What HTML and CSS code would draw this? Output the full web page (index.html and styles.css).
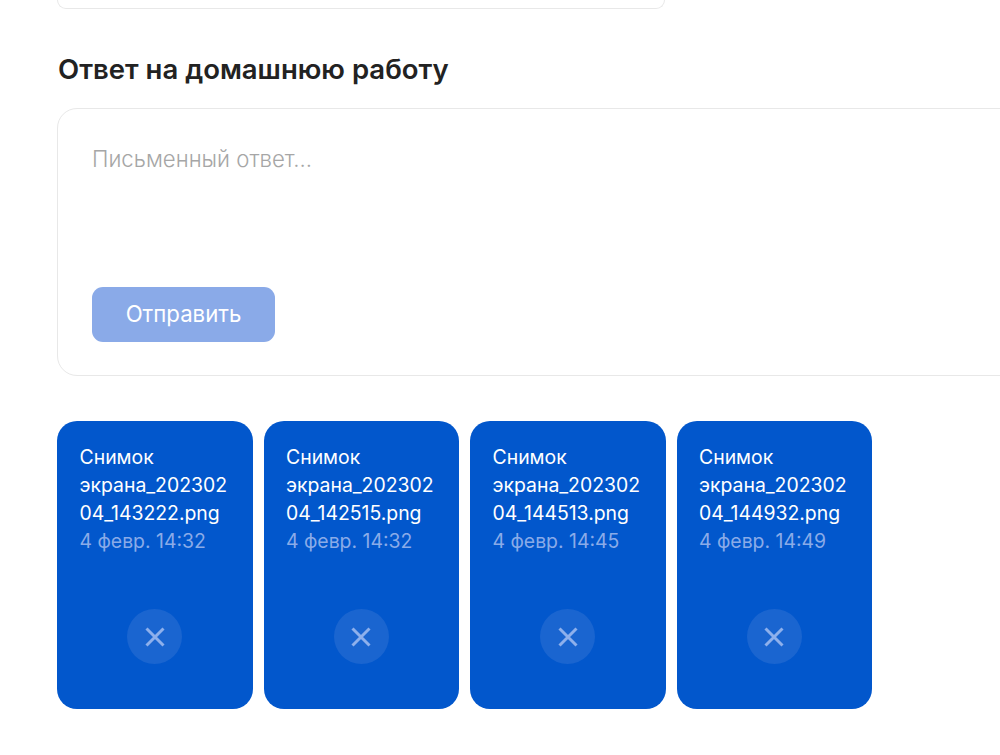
FILE: index.html
```html
<!DOCTYPE html>
<html lang="ru">
<head>
<meta charset="utf-8">
<title>Ответ на домашнюю работу</title>
<link rel="stylesheet" href="styles.css">
</head>
<body>
<main class="page">
  <div class="prev-card"></div>
  <h2 class="title">Ответ на домашнюю работу</h2>
  <section class="answer">
    <div class="placeholder">Письменный ответ...</div>
    <button class="send" type="button">Отправить</button>
  </section>
  <ul class="files">
    <li class="file">
      <div class="file-name">Снимок экрана_20230204_143222.png</div>
      <div class="file-date">4 февр. 14:32</div>
      <button class="remove" type="button" aria-label="Удалить"><svg viewBox="0 0 22 22" class="remove-icon"><path d="M2.5 2.5L19.5 19.5M19.5 2.5L2.5 19.5"/></svg></button>
    </li>
    <li class="file">
      <div class="file-name">Снимок экрана_20230204_142515.png</div>
      <div class="file-date">4 февр. 14:32</div>
      <button class="remove" type="button" aria-label="Удалить"><svg viewBox="0 0 22 22" class="remove-icon"><path d="M2.5 2.5L19.5 19.5M19.5 2.5L2.5 19.5"/></svg></button>
    </li>
    <li class="file">
      <div class="file-name">Снимок экрана_20230204_144513.png</div>
      <div class="file-date">4 февр. 14:45</div>
      <button class="remove" type="button" aria-label="Удалить"><svg viewBox="0 0 22 22" class="remove-icon"><path d="M2.5 2.5L19.5 19.5M19.5 2.5L2.5 19.5"/></svg></button>
    </li>
    <li class="file">
      <div class="file-name">Снимок экрана_20230204_144932.png</div>
      <div class="file-date">4 февр. 14:49</div>
      <button class="remove" type="button" aria-label="Удалить"><svg viewBox="0 0 22 22" class="remove-icon"><path d="M2.5 2.5L19.5 19.5M19.5 2.5L2.5 19.5"/></svg></button>
    </li>
  </ul>
</main>
</body>
</html>
```

FILE: styles.css
```css
html, body {
  margin: 0;
  height: 755px;
  overflow: hidden;
  background: #fff;
}
.page {
  padding-left: 57px;
  font-family: Inter, "Liberation Sans", sans-serif;
  color: #222;
}
.prev-card {
  box-sizing: border-box;
  width: 608px;
  height: 9px;
  border: 1.5px solid #e8e8e8;
  border-top: 0;
  border-radius: 0 0 20px 20px;
}
.title {
  margin: 43px 0 0 1px;
  font-size: 27.5px;
  line-height: 34px;
  font-weight: 600;
  color: #222;
}
.answer {
  box-sizing: border-box;
  width: 1000px;
  height: 268px;
  margin-top: 22px;
  padding: 36px 34px 33px;
  border: 1.5px solid #e8e8e8;
  border-radius: 20px;
  display: flex;
  flex-direction: column;
  align-items: flex-start;
  justify-content: space-between;
}
.placeholder {
  font-size: 22.2px;
  line-height: 28px;
  font-weight: 300;
  color: #a6a6a6;
}
.send {
  width: 183px;
  height: 55px;
  padding: 0 0 2px;
  border: 0;
  border-radius: 11px;
  background: #8aaae8;
  color: #fff;
  font: 400 22.2px/28px Inter, "Liberation Sans", sans-serif;
}
.files {
  list-style: none;
  margin: 45px 0 0;
  padding: 0;
  display: flex;
  gap: 11px;
}
.file {
  box-sizing: border-box;
  width: 195.5px;
  height: 288px;
  padding: 22px 22.5px 0;
  border-radius: 20px;
  background: #0257cc;
  display: flex;
  flex-direction: column;
  align-items: flex-start;
}
.file-name {
  font-size: 19.4px;
  line-height: 28px;
  color: #fff;
  overflow-wrap: anywhere;
}
.file-date {
  font-size: 19.4px;
  line-height: 28px;
  color: #8aabe8;
}
.remove {
  width: 55px;
  height: 55px;
  margin: 54px 0 0 47.5px;
  padding: 0;
  border: 0;
  border-radius: 50%;
  background: #1a65d0;
  display: flex;
  align-items: center;
  justify-content: center;
}
.remove-icon {
  width: 22px;
  height: 22px;
  fill: none;
  stroke: #8eb0ec;
  stroke-width: 3;
}
```
